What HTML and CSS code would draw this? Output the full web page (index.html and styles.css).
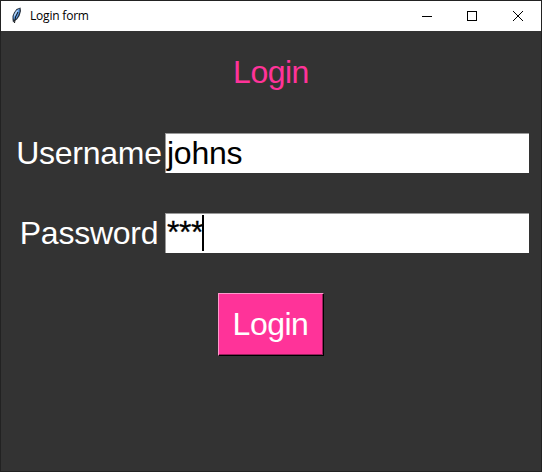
FILE: index.html
```html
<!DOCTYPE html>
<html lang="en">
<head>
<meta charset="utf-8">
<title>Login form</title>
<link rel="stylesheet" href="styles.css">
</head>
<body>
<div class="window">
  <header class="titlebar">
    <svg class="feather" width="12" height="18" viewBox="0 0 12 18">
      <path d="M3 15.500L2.500 12.500V9L4 5.500L6.500 2L10.500 0.500L11 4L9.500 9L7 12.500L4.500 14Z" fill="#26303c"/>
      <path d="M3.500 11V9L5 6L7 3L9.500 1.500V5L8 9L6 12L4 13Z" fill="#5b9be6"/>
      <path d="M4 8L6 4L8.500 2.500L7 5.500L4.500 10Z" fill="#b5d3f4"/>
      <path d="M8 5L5.500 10L4.500 16" fill="none" stroke="#111" stroke-width="1"/>
    </svg>
    <span class="caption">Login form</span>
    <svg class="controls" width="106" height="12" viewBox="0 0 106 12" fill="none" stroke="#000">
      <path d="M1 6.500H11"/>
      <rect x="46.500" y="1.500" width="9" height="9"/>
      <path d="M92 1L102 11M102 1L92 11"/>
    </svg>
  </header>
  <main class="form">
    <h1 class="heading">Login</h1>
    <label class="label" for="user">Username</label>
    <div class="entry" id="user">johns</div>
    <label class="label" for="pass">Password</label>
    <div class="entry masked" id="pass">***<span class="caret"></span></div>
    <button class="submit">Login</button>
  </main>
</div>
</body>
</html>
```
FILE: styles.css
```css
* { box-sizing: border-box; }
body { margin: 0; background: #202020; }
.window {
  width: 542px;
  height: 472px;
  border: 1px solid #222;
  background: #333;
  overflow: hidden;
}
.titlebar {
  display: flex;
  align-items: center;
  height: 30px;
  padding: 0 14px 0 9px;
  background: #fff;
  color: #000;
  font: 12px/30px "Open Sans", "Noto Sans", sans-serif;
}
.caption { margin-left: 8px; letter-spacing: -0.2px; }
.feather { margin-top: -1px; }
.controls { margin-left: auto; }
.form {
  display: grid;
  grid-template-columns: 149px 364px;
  grid-template-rows: 40px 40px 40px 63px;
  row-gap: 40px;
  padding: 22px 0 0 15px;
  align-items: center;
  font: 32px/40px "Liberation Sans", Arial, sans-serif;
  letter-spacing: -0.25px;
}
.heading {
  grid-column: 1 / 3;
  margin: -2px 3px 0 0;
  font: inherit;
  text-align: center;
  color: #ff3399;
  letter-spacing: -0.5px;
}
.label {
  padding-right: 3px;
  text-align: center;
  color: #fff;
  white-space: nowrap;
}
.entry {
  display: flex;
  height: 40px;
  padding-left: 1px;
  border-top: 1px solid #999;
  border-left: 1px solid #999;
  background: #fff;
  color: #000;
  line-height: 38px;
}
.masked {
  line-height: 36px;
  letter-spacing: -0.5px;
  -webkit-text-stroke: 0.3px #000;
}
.caret { width: 2px; height: 36px; margin: 1px 0 0 -1px; background: #000; }
.submit {
  grid-column: 1 / 3;
  justify-self: center;
  width: 106px;
  height: 63px;
  margin-right: 4px;
  padding: 0 0 2px;
  border: 1px solid;
  border-color: #ff99cc #000 #000 #ff99cc;
  box-shadow: inset -1px -1px #99205c;
  background: #ff3399;
  color: #fff;
  font: inherit;
  letter-spacing: -0.5px;
}
```
